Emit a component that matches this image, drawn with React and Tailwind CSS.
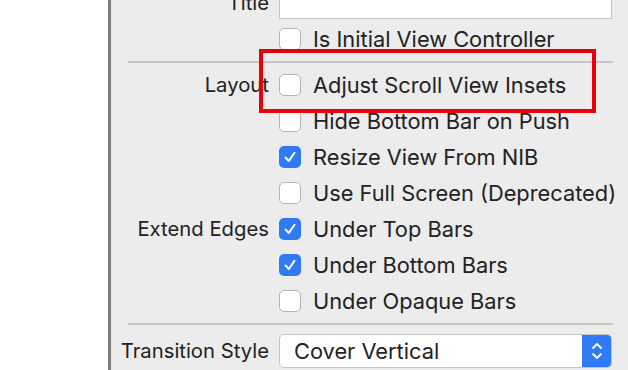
import { Fragment } from "react";

const rows = [
    { label: "", text: "Hide Bottom Bar on Push", checked: false },
    { label: "", text: "Resize View From NIB", checked: true },
    { label: "", text: "Use Full Screen (Deprecated)", checked: false },
    { label: "Extend Edges", text: "Under Top Bars", checked: true },
    { label: "", text: "Under Bottom Bars", checked: true },
    { label: "", text: "Under Opaque Bars", checked: false },
];

function Check({ checked }) {
    if (checked)
        return (
            <div className="w-[22px] h-[22px] rounded-[5px] bg-[#2f7bf5] flex items-center justify-center shrink-0">
                <svg width="14" height="14" viewBox="0 0 14 14">
                    <path d="M2.5 7.5 L5.8 11 L11.5 2.8" fill="none" stroke="#fff" strokeWidth="2" strokeLinecap="round" strokeLinejoin="round" />
                </svg>
            </div>
        );
    return <div className="w-[22px] h-[22px] rounded-[5px] bg-white border border-[#b4b4b4] shrink-0" />;
}

function Row({ label, text, checked }) {
    return (
        <div className="flex items-center h-[36px]">
            <div className="w-[158px] text-right whitespace-nowrap text-[20.3px]">{label}</div>
            <div className="ml-[10px]">
                <Check checked={checked} />
            </div>
            <div className="ml-[12px] whitespace-nowrap">{text}</div>
        </div>
    );
}

export default function App() {
    return (
        <div className="w-[628px] h-[370px] flex overflow-hidden bg-white text-[21.8px] text-[#222]" style={{ fontFamily: "Inter, 'Liberation Sans', sans-serif" }}>
            {/* left pane */}
            <div className="w-[108px] bg-white shrink-0" />
            <div className="w-[3px] bg-[#7d7d7d] shrink-0" />

            {/* inspector */}
            <div className="relative flex-1 bg-[#ececec]">
                <div className="-mt-[15px] flex items-center h-[36px]">
                    <div className="w-[158px] text-right text-[20.3px]">Title</div>
                    <div className="ml-[10px] mt-[8px] w-[333px] h-[24px] bg-white border border-[#c4c4c4]" />
                </div>
                <Row text="Is Initial View Controller" checked={false} />

                <div className="ml-[17px] mr-[15px] my-[4px] h-[2px] bg-[#c6c6c6]" />

                <Row label="Layout" text="Adjust Scroll View Insets" checked={false} />
                {rows.map((r, i) => (
                    <Fragment key={i}>
                        <Row {...r} />
                    </Fragment>
                ))}

                <div className="ml-[17px] mr-[15px] mt-[4px] mb-[9px] h-[2px] bg-[#c6c6c6]" />

                <div className="flex items-center h-[34px]">
                    <div className="w-[158px] text-right whitespace-nowrap text-[20.3px]">Transition Style</div>
                    <div className="ml-[10px] w-[333px] h-[34px] flex bg-white border border-[#c4c4c4] rounded-[5px] overflow-hidden">
                        <div className="flex-1 pl-[14px] flex items-center">Cover Vertical</div>
                        <div className="w-[29px] bg-[#2f7bf5] flex items-center justify-center">
                            <svg width="14" height="22" viewBox="0 0 14 22">
                                <path d="M3 8 L7 4 L11 8 M3 14 L7 18 L11 14" fill="none" stroke="#fff" strokeWidth="1.8" strokeLinecap="round" strokeLinejoin="round" />
                            </svg>
                        </div>
                    </div>
                </div>

                {/* highlight annotation */}
                <div className="absolute left-[148px] top-[49px] w-[337px] h-[64px] border-[4px] border-[#e5000a]" />
            </div>
        </div>
    );
}
